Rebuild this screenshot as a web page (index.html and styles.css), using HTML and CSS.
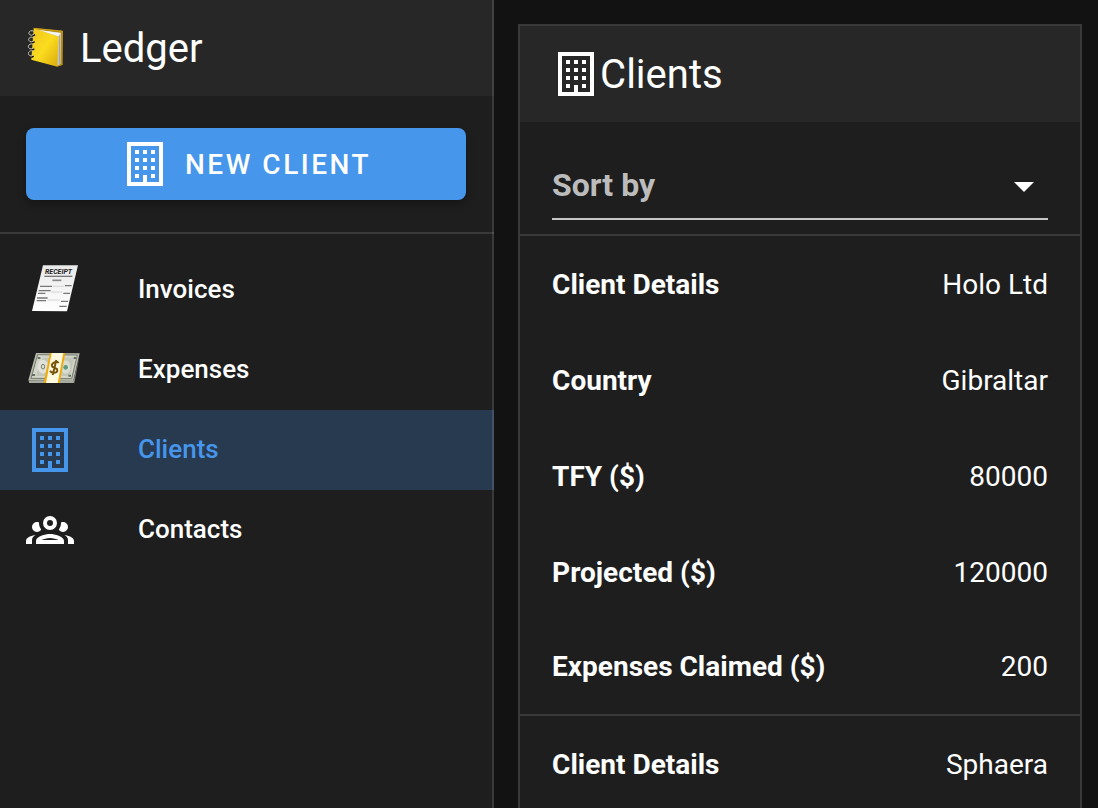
FILE: index.html
```html
<!DOCTYPE html>
<html lang="en">
<head>
<meta charset="utf-8">
<meta name="viewport" content="width=device-width, initial-scale=1">
<title>Ledger</title>
<link rel="stylesheet" href="styles.css">
</head>
<body>
<svg class="sprite" aria-hidden="true">
  <symbol id="building" viewBox="0 0 24 24"><path fill="currentColor" fill-rule="evenodd" d="M3 1H21V23H3ZM5 3V21H11V17.5H13V21H19V3ZM7 5H9V7H7ZM11 5H13V7H11ZM15 5H17V7H15ZM7 9H9V11H7ZM11 9H13V11H11ZM15 9H17V11H15ZM7 13H9V15H7ZM11 13H13V15H11ZM15 13H17V15H15ZM7 17H9V19H7ZM15 17H17V19H15Z"/></symbol>
</svg>
<div class="app">
  <aside class="sidebar">
    <header class="brand">
      <svg class="brand-icon" viewBox="48 48 120 132" aria-hidden="true">
        <defs><linearGradient id="cover" x1="0" y1="0" x2="1" y2="1"><stop offset="0" stop-color="#f0c51c"/><stop offset=".5" stop-color="#fbdc1f"/><stop offset="1" stop-color="#d9a90c"/></linearGradient></defs>
        <path d="M74 54L159 63L158 165L142 170Z" fill="#b98d0c"/>
        <path d="M78 59L153 68L152 162L142 167Z" fill="#c9c9c4"/>
        <path d="M82 59L151 69L146 79Z" fill="#f4f4f0"/>
        <path d="M149 76L148 163" stroke="#929289" stroke-width="2"/>
        <path d="M71 55L146 80Q147 81 146 84L142 170L64 149Z" fill="url(#cover)"/>
        <path d="M71 55L157 63" stroke="#e0b81d" stroke-width="2"/>
        <g fill="none" stroke="#151515" stroke-width="5"><path d="M66 78L75 74M66 98L74 95M65 120L73 117M64 142L71 139"/></g>
        <g fill="none" stroke="#c4c4b5" stroke-width="3"><path d="M72 64C61 58 52 68 59 74Q64 78 71 73M71 83C60 77 51 88 59 94Q64 98 71 93M70 103C59 98 50 109 58 115Q64 119 70 114M69 123C58 119 51 130 58 136Q63 140 69 136"/></g>
      </svg>
      <h1 class="title">Ledger</h1>
    </header>
    <div class="action">
      <button class="new-client" type="button"><svg class="icon" aria-hidden="true"><use href="#building"/></svg><span class="label">New Client</span></button>
    </div>
    <nav class="nav" aria-label="Main">
      <a class="nav-item" href="#invoices">
        <span class="nav-icon"><svg class="emoji" viewBox="33 36 168 168" aria-hidden="true">
          <defs><linearGradient id="paper" x1="0" y1="0" x2="0" y2="1"><stop offset="0" stop-color="#e9e9e9"/><stop offset="1" stop-color="#fff"/></linearGradient></defs>
          <path d="M84 46L189 46L156 184L51 183Z" fill="url(#paper)"/>
          <text class="receipt-title" x="90" y="73">RECEIPT</text>
          <path d="M88 79H172" stroke="#777" stroke-width="4"/>
          <path d="M112 91H139" stroke="#888" stroke-width="5"/>
          <g stroke="#777" stroke-width="4"><path d="M75 109H111M150 107H170M71 122H107M69 130H91M145 130H165M66 144H98M65 152H93M138 154H159M133 169H155"/></g>
          <path d="M114 109H147M109 126H142M98 150H135" stroke="#c4c4c4" stroke-width="2"/>
        </svg></span>
        <span class="nav-label">Invoices</span>
      </a>
      <a class="nav-item" href="#expenses">
        <span class="nav-icon"><svg class="emoji" viewBox="33 21 168 168" aria-hidden="true">
          <path d="M40 136L176 136L194 59L178 144H43Z" fill="#8b8e83"/>
          <path d="M42 137H176L175 144H43Z" fill="#a7aa9e"/>
          <path d="M63 54L194 55L175 137L40 136Z" fill="#b9bcae"/>
          <path d="M68 59L187 60L170 131L48 130Z" fill="#d3d5c8" stroke="#777c70" stroke-width="3"/>
          <path d="M84 68H178L165 123H62Z" fill="#c3c7b9"/>
          <ellipse cx="84" cy="95" rx="16" ry="21" fill="#e0e2d7"/>
          <ellipse cx="84" cy="95" rx="5" ry="7" fill="none" stroke="#777c70" stroke-width="3"/>
          <ellipse cx="152" cy="96" rx="14" ry="20" fill="#d9ddd0"/>
          <circle cx="152" cy="97" r="7" fill="#5a9c82"/>
          <path d="M68 69L76 69M51 120L60 120M176 69L183 69M160 122L168 122" stroke="#686e62" stroke-width="6"/>
          <path d="M105 54H151L134 144H87L88 133Z" fill="#efab0c"/>
          <path d="M110 54H145L128 144H93Z" fill="#fff9df"/>
          <path d="M131 84Q127 78 118 82Q107 88 112 95L126 102Q130 112 118 113Q109 114 105 107M124 75L113 120" fill="none" stroke="#765409" stroke-width="6"/>
        </svg></span>
        <span class="nav-label">Expenses</span>
      </a>
      <a class="nav-item active" href="#clients" aria-current="page">
        <span class="nav-icon"><svg class="icon" aria-hidden="true"><use href="#building"/></svg></span>
        <span class="nav-label">Clients</span>
      </a>
      <a class="nav-item" href="#contacts">
        <span class="nav-icon"><svg class="icon" viewBox="0 0 24 24" aria-hidden="true"><path fill="currentColor" d="M12,5A3.5,3.5 0 0,0 8.5,8.5A3.5,3.5 0 0,0 12,12A3.5,3.5 0 0,0 15.5,8.5A3.5,3.5 0 0,0 12,5M12,7A1.5,1.5 0 0,1 13.5,8.5A1.5,1.5 0 0,1 12,10A1.5,1.5 0 0,1 10.5,8.5A1.5,1.5 0 0,1 12,7M5.5,8A2.5,2.5 0 0,0 3,10.5C3,11.44 3.53,12.25 4.29,12.68C4.65,12.88 5.06,13 5.5,13C5.94,13 6.35,12.88 6.71,12.68C7.08,12.47 7.39,12.17 7.62,11.81C6.89,10.86 6.5,9.7 6.5,8.5C6.5,8.41 6.5,8.31 6.5,8.22C6.2,8.08 5.86,8 5.5,8M18.5,8C18.14,8 17.8,8.08 17.5,8.22C17.5,8.31 17.5,8.41 17.5,8.5C17.5,9.7 17.11,10.86 16.38,11.81C16.5,12 16.63,12.15 16.78,12.3C16.94,12.45 17.1,12.58 17.29,12.68C17.65,12.88 18.06,13 18.5,13C18.94,13 19.35,12.88 19.71,12.68C20.47,12.25 21,11.44 21,10.5A2.5,2.5 0 0,0 18.5,8M12,14C9.66,14 5,15.17 5,17.5V19H19V17.5C19,15.17 14.34,14 12,14M4.71,14.55C2.78,14.78 0,15.76 0,17.5V19H3V17.07C3,16.06 3.69,15.22 4.71,14.55M19.29,14.55C20.31,15.22 21,16.06 21,17.07V19H24V17.5C24,15.76 21.22,14.78 19.29,14.55M12,16C13.53,16 15.24,16.5 16.23,17H7.77C8.76,16.5 10.47,16 12,16Z"/></svg></span>
        <span class="nav-label">Contacts</span>
      </a>
    </nav>
  </aside>
  <main class="main">
    <section class="card">
      <header class="card-header">
        <svg class="icon" aria-hidden="true"><use href="#building"/></svg>
        <h2 class="title">Clients</h2>
      </header>
      <div class="sort">
        <div class="select-wrap">
          <select class="select" aria-label="Sort by"><option>Sort by</option></select>
          <svg class="caret" viewBox="0 0 20 10" aria-hidden="true"><path d="M0 0H20L10 10Z" fill="#fff"/></svg>
        </div>
      </div>
      <table class="clients">
        <tbody>
          <tr><th scope="row">Client Details</th><td>Holo Ltd</td></tr>
          <tr><th scope="row">Country</th><td>Gibraltar</td></tr>
          <tr><th scope="row">TFY ($)</th><td>80000</td></tr>
          <tr><th scope="row">Projected ($)</th><td>120000</td></tr>
          <tr class="last"><th scope="row">Expenses Claimed ($)</th><td>200</td></tr>
        </tbody>
        <tbody>
          <tr><th scope="row">Client Details</th><td>Sphaera</td></tr>
        </tbody>
      </table>
    </section>
  </main>
</div>
</body>
</html>
```
FILE: styles.css
```css
* { box-sizing: border-box; }
body {
  margin: 0;
  background: #121212;
  color: #fff;
  font-family: Roboto, "Liberation Sans", sans-serif;
}
.sprite { display: none; }
.app { display: flex; height: 100vh; overflow: hidden; }
.sidebar {
  position: relative;
  flex: 0 0 45%;
  background: #1e1e1e;
}
/* Translucent divider drawn over the header and the active item */
.sidebar::after {
  content: "";
  position: absolute;
  top: 0;
  right: 0;
  bottom: 0;
  width: 2px;
  background: rgba(255, 255, 255, 0.12);
}
.brand {
  display: flex;
  align-items: center;
  gap: 14px;
  height: 96px;
  padding: 0 26px;
  background: #272727;
}
.brand-icon { width: 40px; height: 44px; }
.title {
  margin: 0;
  padding-top: 2px;
  font-size: 40px;
  font-weight: 400;
  line-height: 48px;
}
.icon { flex: none; display: block; width: 48px; height: 48px; }
.action { padding: 32px 28px 32px 26px; border-bottom: 2px solid #393939; }
.new-client {
  display: flex;
  align-items: center;
  justify-content: center;
  gap: 16px;
  width: 100%;
  height: 72px;
  padding: 0;
  border: 0;
  border-radius: 8px;
  background: #4696ec;
  color: #fff;
  font: 500 28px/40px Roboto, "Liberation Sans", sans-serif;
  letter-spacing: 0.09em;
  text-transform: uppercase;
  box-shadow: 0 4px 8px rgba(0, 0, 0, 0.3);
}
.label { padding-top: 2px; }
.nav { padding-top: 16px; }
.nav-item {
  display: flex;
  align-items: center;
  height: 80px;
  padding: 0 26px;
  color: #fff;
  font-size: 26px;
  font-weight: 500;
  line-height: 32px;
  text-decoration: none;
}
.nav-item.active { background: #283a50; color: #4696ec; }
.nav-icon { flex: 0 0 112px; }
.nav-label { padding-bottom: 2px; }
.emoji { display: block; width: 56px; height: 56px; }
.receipt-title { font: italic 700 21px Roboto, sans-serif; fill: #222; }
.main { flex: 1; min-width: 0; padding: 24px 16px 24px 24px; }
.card { background: #1e1e1e; border: 2px solid #393939; }
.card-header {
  display: flex;
  align-items: center;
  height: 96px;
  padding: 0 32px;
  background: #272727;
}
.sort { padding: 32px 32px 14px; border-bottom: 2px solid #393939; }
.select-wrap { display: grid; align-items: center; }
.select, .caret { grid-area: 1 / 1; }
.select {
  width: 100%;
  height: 66px;
  padding: 0 0 2px;
  border: 0;
  border-bottom: 2px solid #c7c7c7;
  border-radius: 0;
  appearance: none;
  background: transparent;
  color: #bcbcbc;
  font: 700 32px/40px Roboto, "Liberation Sans", sans-serif;
}
.caret {
  justify-self: end;
  width: 20px;
  height: 10px;
  margin-right: 14px;
  pointer-events: none;
}
.clients { width: 100%; border-spacing: 0; font-size: 28px; line-height: 32px; }
.clients th, .clients td { height: 96px; padding: 2px 32px 0; }
.clients th { font-weight: 700; text-align: left; }
.clients td { text-align: right; }
.clients .last th, .clients .last td { padding-top: 0; border-bottom: 2px solid #393939; }
```
